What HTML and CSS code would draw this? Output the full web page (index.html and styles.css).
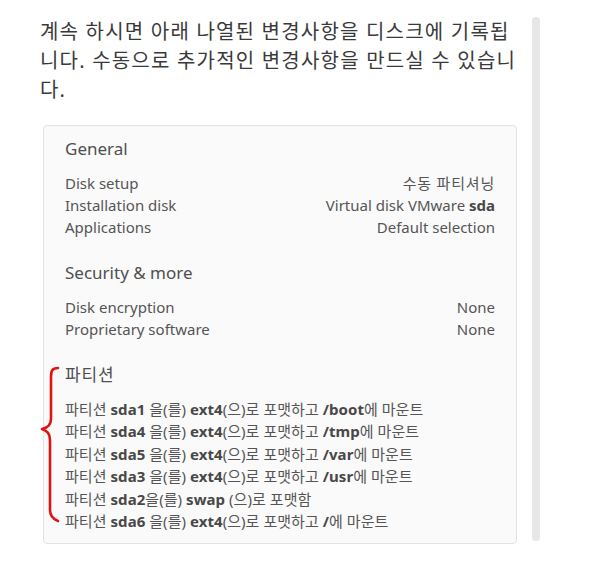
FILE: index.html
```html
<!DOCTYPE html>
<html lang="ko">
<head>
  <meta charset="UTF-8" />
  <meta name="viewport" content="width=device-width, initial-scale=1" />
  <title>설치 요약</title>
  <link rel="stylesheet" href="styles.css">
</head>
<body>
  <div class="page">
    <div class="content">
      <p class="intro">계속 하시면 아래 나열된 변경사항을 디스크에 기록됩니다. 수동으로 추가적인 변경사항을 만드실 수 있습니다.</p>

      <div class="card">
        <div class="section">
          <h3>General</h3>
          <div class="row"><span>Disk setup</span><span class="ko">수동 파티셔닝</span></div>
          <div class="row"><span>Installation disk</span><span>Virtual disk VMware <b>sda</b></span></div>
          <div class="row"><span>Applications</span><span>Default selection</span></div>
        </div>

        <div class="section">
          <h3>Security &amp; more</h3>
          <div class="row"><span>Disk encryption</span><span>None</span></div>
          <div class="row"><span>Proprietary software</span><span>None</span></div>
        </div>

        <div class="section partitions">
          <!-- red hand-drawn brace over the partition list -->
          <svg class="brace" width="22" height="160" viewBox="0 0 22 160">
            <path d="M19 3 C13 3 12 6 12 12 L12 54 C12 61 8 63 3 64 C8 66 11 68 11 75 L11 145 C11 151 14 154 19 156" fill="none" stroke="#e01313" stroke-width="2.6" stroke-linecap="round" stroke-linejoin="round"/>
          </svg>
          <h3 class="ko">파티션</h3>
          <div class="line">파티션 <b>sda1</b> 을(를) <b>ext4</b>(으)로 포맷하고 <b>/boot</b>에 마운트</div>
          <div class="line">파티션 <b>sda4</b> 을(를) <b>ext4</b>(으)로 포맷하고 <b>/tmp</b>에 마운트</div>
          <div class="line">파티션 <b>sda5</b> 을(를) <b>ext4</b>(으)로 포맷하고 <b>/var</b>에 마운트</div>
          <div class="line">파티션 <b>sda3</b> 을(를) <b>ext4</b>(으)로 포맷하고 <b>/usr</b>에 마운트</div>
          <div class="line">파티션 <b>sda2</b>을(를) <b>swap</b> (으)로 포맷함</div>
          <div class="line">파티션 <b>sda6</b> 을(를) <b>ext4</b>(으)로 포맷하고 <b>/</b>에 마운트</div>
        </div>
      </div>
    </div>

    <div class="scrollbar"></div>
  </div>
</body>
</html>
```

FILE: styles.css
```css
body {
  margin: 0;
  background: #fff;
  font-family: 'Noto Sans', 'Noto Sans CJK KR', sans-serif;
  color: #4d4d4d;
}

.page {
  display: flex;
  align-items: flex-start;
  padding-top: 17px;
}

.content {
  padding-left: 40px;
}

.intro {
  margin: 0;
  width: 478px;
  font-size: 20px;
  line-height: 29px;
  letter-spacing: 1.2px;
  color: #3a3a3a;
}

.card {
  margin: 21px 0 0 3px;
  width: 430px;
  padding: 11px 21px 11px 21px;
  background: #fafafa;
  border: 1px solid #e3e3e3;
  border-radius: 4px;
}

.section {
  position: relative;
  margin-bottom: 23px;
}

.section:last-child {
  margin-bottom: 0;
}

.section h3 {
  margin: 0 0 11px 0;
  font-size: 17px;
  font-weight: 400;
  line-height: 24px;
  color: #4f4f4f;
}

.ko {
  letter-spacing: 0.8px;
}

.row {
  display: flex;
  justify-content: space-between;
  font-size: 15px;
  line-height: 22px;
  color: #555;
}

.row b,
.line b {
  font-weight: 700;
  color: #484848;
}

.line {
  font-size: 15px;
  line-height: 22.4px;
  letter-spacing: 0.05px;
  color: #555;
}

.brace {
  position: absolute;
  left: -26px;
  top: 2px;
}

.scrollbar {
  margin-left: 14px;
  width: 8px;
  height: 524px;
  background: #e7e7e7;
  border-radius: 4px;
}
```
